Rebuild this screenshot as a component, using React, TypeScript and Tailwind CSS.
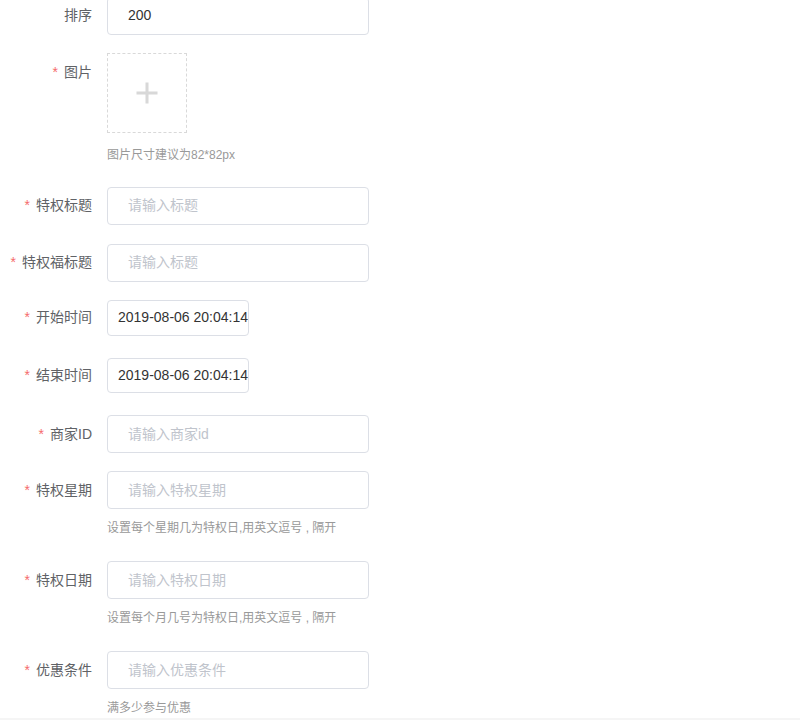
const font = "font-['Liberation_Sans','Noto_Sans_CJK_SC',sans-serif]";

function Label({ text, required = true }: { text: string; required?: boolean }) {
    return (
        <div className="w-[107px] shrink-0 pr-[15px] flex items-center justify-end text-[14px] text-[#606266] h-full">
            {required && <span className="text-[#f56c6c] mr-[6px]">*</span>}
            <span>{text}</span>
        </div>
    );
}

function TextRow({
    label,
    placeholder,
    value,
    required = true,
    className = "",
}: {
    label: string;
    placeholder?: string;
    value?: string;
    required?: boolean;
    className?: string;
}) {
    return (
        <div className={"flex h-[38px] " + className}>
            <Label text={label} required={required} />
            <div className="w-[262px] h-full border border-[#dcdfe6] rounded-[4px] bg-white flex items-center pl-[20px] text-[14px]">
                {value ? (
                    <span className="text-[#333]">{value}</span>
                ) : (
                    <span className="text-[#c0c4cc]">{placeholder}</span>
                )}
            </div>
        </div>
    );
}

function DateRow({ label, value, className = "" }: { label: string; value: string; className?: string }) {
    return (
        <div className={"flex h-[36px] " + className}>
            <Label text={label} />
            <div className="w-[142px] h-full border border-[#dcdfe6] rounded-[4px] bg-white flex items-center pl-[10px] text-[14px] text-[#333] whitespace-nowrap overflow-hidden">
                {value}
            </div>
        </div>
    );
}

function Hint({ text, className = "" }: { text: string; className?: string }) {
    return <div className={"pl-[107px] h-[20px] leading-[20px] text-[12px] text-[#999] " + className}>{text}</div>;
}

export default function App() {
    return (
        <div className={"w-[800px] h-[720px] bg-white overflow-hidden flex flex-col " + font}>
            <TextRow label="排序" value="200" required={false} className="-mt-[3px]" />

            <div className="flex mt-[18px]">
                <div className="w-[107px] shrink-0 pr-[15px] flex justify-end text-[14px] text-[#606266] pt-[9px]">
                    <span className="text-[#f56c6c] mr-[6px]">*</span>
                    <span>图片</span>
                </div>
                <div className="w-[80px] h-[80px] border border-dashed border-[#d9d9d9] flex items-center justify-center">
                    <svg width="24" height="24" viewBox="0 0 24 24">
                        <path d="M12 1.5v21M1.5 12h21" stroke="#d8d8d8" strokeWidth="3" fill="none" />
                    </svg>
                </div>
            </div>
            <Hint text="图片尺寸建议为82*82px" className="mt-[12px]" />

            <TextRow label="特权标题" placeholder="请输入标题" className="mt-[22px]" />
            <TextRow label="特权福标题" placeholder="请输入标题" className="mt-[19px]" />
            <DateRow label="开始时间" value="2019-08-06 20:04:14" className="mt-[18px]" />
            <DateRow label="结束时间" value="2019-08-06 20:04:14" className="mt-[22px]" />
            <TextRow label="商家ID" placeholder="请输入商家id" className="mt-[22px]" />
            <TextRow label="特权星期" placeholder="请输入特权星期" className="mt-[18px]" />
            <Hint text="设置每个星期几为特权日,用英文逗号 , 隔开" className="mt-[9px]" />
            <TextRow label="特权日期" placeholder="请输入特权日期" className="mt-[23px]" />
            <Hint text="设置每个月几号为特权日,用英文逗号 , 隔开" className="mt-[9px]" />
            <TextRow label="优惠条件" placeholder="请输入优惠条件" className="mt-[23px]" />
            <Hint text="满多少参与优惠" className="mt-[9px]" />
            <div className="h-[2px] bg-[#f5f5f5] shrink-0" />
        </div>
    );
}
